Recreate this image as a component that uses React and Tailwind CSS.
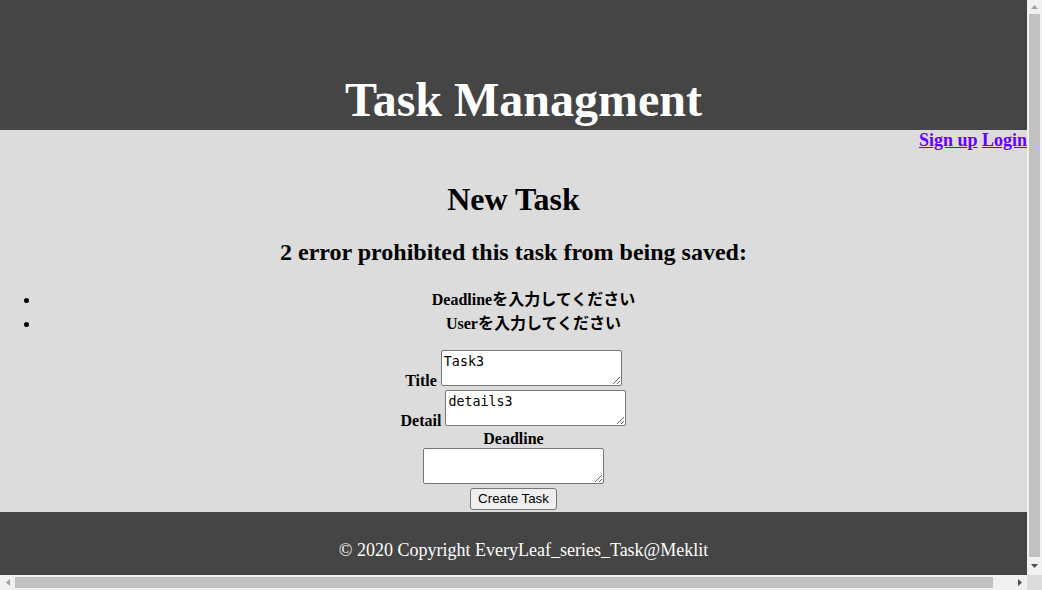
import React from 'react';

const serif = "font-['Liberation_Serif','Noto_Sans_CJK_JP',serif]";

function Field({ label, value }) {
  return (
    <div className="flex items-end justify-center gap-1">
      <label className="font-bold text-[16px] leading-[18px] -mb-[4px]">{label}</label>
      <textarea
        defaultValue={value}
        className="w-[181px] h-[36px] bg-white border border-[#767676] rounded-[2px] px-[2px] pt-[3px] pb-[1px] text-[13.33px] leading-[15px] font-['DejaVu_Sans_Mono',monospace] text-black resize"
      />
    </div>
  );
}

function App() {
  const errors = ['Deadlineを入力してください', 'Userを入力してください'];

  return (
    <div className="w-[1042px] h-[590px] flex flex-col overflow-hidden">
      <div className="flex flex-1 min-h-0">
        <div className={`w-[1027px] flex flex-col bg-[#dcdcdc] text-black ${serif}`}>
          <header className="h-[130px] shrink-0 bg-[#454545] pt-[72px] pl-5">
            <h1 className="text-center text-white font-bold text-[48px] leading-[55px]">Task Managment</h1>
          </header>

          <main className="flex-1 min-h-0 overflow-hidden">
            <nav className="text-right font-bold text-[18px] leading-[21px]">
              <a href="#" className="text-[#6600ff] underline">Sign up</a>{' '}
              <a href="#" className="text-[#6600ff] underline">Login</a>
            </nav>

            <h1 className="mt-[30px] text-center font-bold text-[32px] leading-[37px]">New Task</h1>
            <h2 className="mt-[20px] text-center font-bold text-[24px] leading-[28px]">
              2 error prohibited this task from being saved:
            </h2>

            <ul className="mt-[22px] pl-10 list-disc text-center font-bold text-[16px] leading-[24px]">
              {errors.map((e) => (
                <li key={e}>{e}</li>
              ))}
            </ul>

            <form className="mt-[14px] flex flex-col items-center">
              <Field label="Title" value="Task3" />
              <div className="mt-[4px]">
                <Field label="Detail" value="details3" />
              </div>
              <label className="mt-[4px] font-bold text-[16px] leading-[18px]">Deadline</label>
              <textarea className="w-[181px] h-[36px] bg-white border border-[#767676] rounded-[2px] px-[2px] pt-[3px] pb-[1px] text-[13.33px] font-['DejaVu_Sans_Mono',monospace] resize" />
              <button
                type="button"
                className="mt-[4px] w-[87px] h-[22px] bg-[#efefef] border border-[#767676] rounded-[3px] text-[13.33px] leading-[16px] font-['Liberation_Sans',Arial,sans-serif] text-black"
              >
                Create Task
              </button>
            </form>
          </main>

          <footer className="h-[63px] shrink-0 bg-[#454545] pt-[28px] pl-5">
            <p className="text-center text-white text-[18px] leading-[21px]">
              © 2020 Copyright EveryLeaf_series_Task@Meklit
            </p>
          </footer>
        </div>

        {/* vertical scrollbar */}
        <div className="w-[15px] bg-[#f1f1f1] flex flex-col items-center">
          <div className="h-[14px] flex items-center justify-center">
            <svg width="7" height="4" viewBox="0 0 7 4"><path d="M3.5 0L7 4H0z" fill="#a3a3a3" /></svg>
          </div>
          <div className="w-[11px] flex-1 bg-[#c1c1c1]" />
          <div className="h-[18px] flex items-center justify-center">
            <svg width="7" height="4" viewBox="0 0 7 4"><path d="M0 0H7L3.5 4z" fill="#505050" /></svg>
          </div>
        </div>
      </div>

      {/* horizontal scrollbar */}
      <div className="h-[15px] flex bg-[#f1f1f1]">
        <div className="w-[15px] flex items-center justify-center">
          <svg width="4" height="7" viewBox="0 0 4 7"><path d="M0 3.5L4 0V7z" fill="#a3a3a3" /></svg>
        </div>
        <div className="w-[978px] my-[2px] bg-[#c1c1c1]" />
        <div className="flex-1 flex items-center justify-end pr-[5px]">
          <svg width="4" height="7" viewBox="0 0 4 7"><path d="M0 0L4 3.5L0 7z" fill="#505050" /></svg>
        </div>
        <div className="w-[15px] bg-[#dcdcdc]" />
      </div>
    </div>
  );
}

export default App;
